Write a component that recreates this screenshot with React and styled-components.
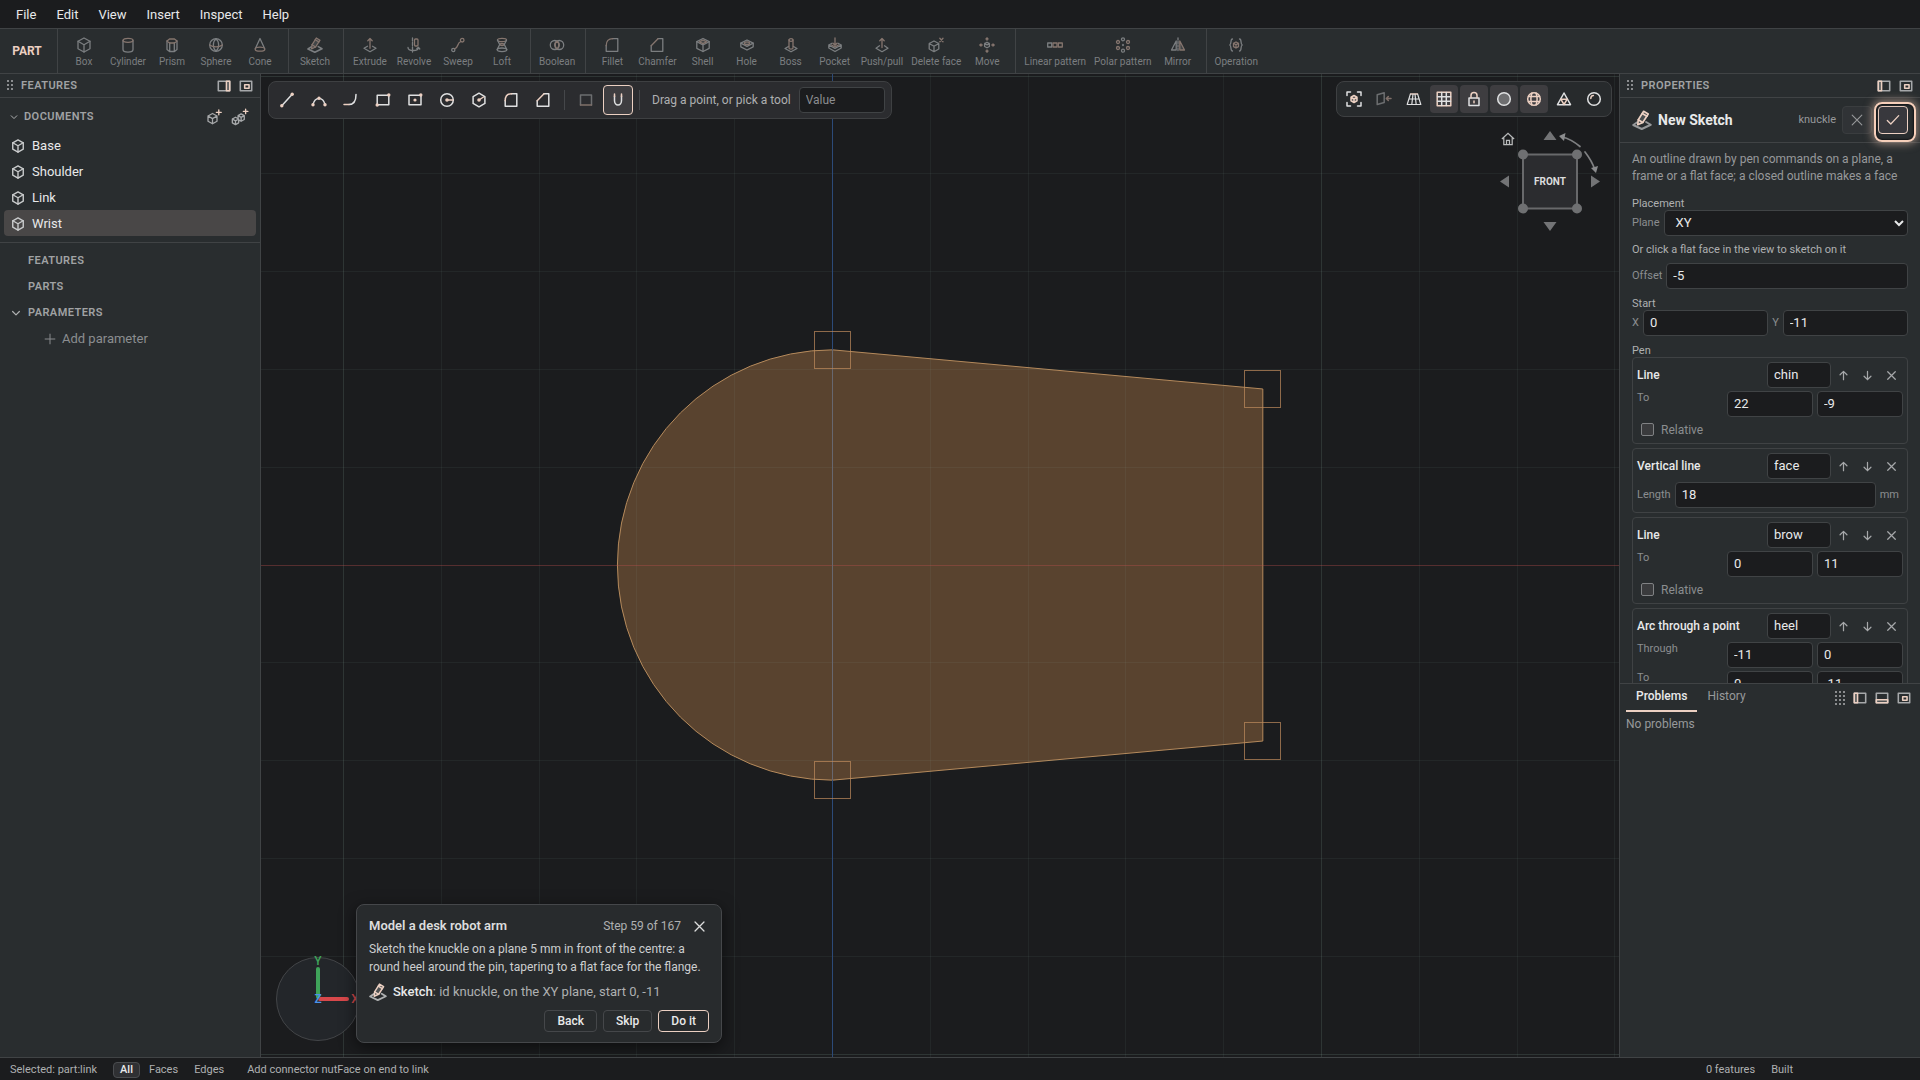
import React from 'react';
import styled, { createGlobalStyle } from 'styled-components';

const GlobalStyle = createGlobalStyle`
  :root {
    --ink: #1b1c1e;
    --panel: #292d2f;
    --raised: #2b2c2f;
    --line: #404345;
    --muted: #97999b;
    --soft: #aeb0b1;
    --text: #e8e9ea;
    --accent: #ecd0c2;
  }
  * { box-sizing: border-box; }
  body {
    margin: 0;
    background: var(--ink);
    color: var(--text);
    font: 13px/16px Roboto, "Liberation Sans", sans-serif;
  }
  button, input, select { font: inherit; color: inherit; margin: 0; }
  h2, h3, p { margin: 0; font-weight: 400; }
`;

/* ---------- icons ---------- */

const IconSvg = styled.svg`
  display: block;
  flex: none;
  width: ${(p) => p.$size || 16}px;
  height: ${(p) => p.$size || 16}px;
  fill: none;
  stroke: currentColor;
  stroke-width: ${(p) => p.$weight || 1.3};
  stroke-linejoin: round;
  stroke-linecap: round;
  .a { stroke: var(--accent); }
  .f { fill: var(--accent); stroke: none; }
  .g { fill: currentColor; fill-opacity: 0.3; }
`;

const icons = {
  box: <><path d="M8 1 14 4.3v7.4L8 15l-6-3.3V4.3z" /><path d="M2 4.3 8 7.7l6-3.4M8 7.7V15" /></>,
  cylinder: <><path d="M3 3.4v9.2C3 16 13 16 13 12.600V3.400" /><ellipse className="a" cx="8" cy="3.300" rx="5" ry="2" /></>,
  prism: <><path d="M3 4v8.500L5.500 14.500h5L13 12.500V4M5.700 6v8.300M10.300 6v8.300" /><path className="a" d="M3 4 5.500 2h5L13 4l-2.500 2h-5z" /></>,
  sphere: <><circle cx="8" cy="8" r="6.300" /><path d="M8 1.700c-3.500 3-3.500 9.600 0 12.600 3.500-3 3.500-9.600 0-12.600" /><path className="a" d="M1.700 8c3 2.400 9.600 2.400 12.600 0" /></>,
  cone: <><path d="M3.300 11.800 8 1.500l4.700 10.300" /><ellipse className="a" cx="8" cy="12.200" rx="4.800" ry="2" /></>,
  sketch: <><path strokeWidth="1.600" d="M4.200 9.800 1 12 7.800 15.200 15 11.800 11.300 9.600" /><path className="a g" d="M4.600 11.800 5 7.800 9.300 1 13 3.200 8.600 10z" /><path className="a" d="M8.200 2.800 11.900 5M5 7.800 8.600 10" /></>,
  extrude: <><path d="M5.500 9.300 2 11.300 8 14.700l6-3.400-3.500-2" /><path className="a" d="M8 11.300V1.600M5.800 3.700 8 1.500l2.200 2.200" /></>,
  revolve: <><path d="M6.500 1v14" strokeDasharray="3 1.500" /><rect className="a" x="8.500" y="2" width="3.500" height="7" rx="1" /><path d="M2 10.500c0 4 10.500 4 10.500 0M10.800 11.500l1.700-1.200 1.300 1.700" /></>,
  sweep: <><circle className="a" cx="12.200" cy="3.200" r="1.800" /><circle cx="3.300" cy="13" r="1.600" /><path className="a" d="M4.500 12C9 10.500 6.500 6 10.800 4.500" /></>,
  loft: <><ellipse className="a" cx="8" cy="3" rx="4.500" ry="1.600" /><ellipse className="a" cx="8" cy="7.500" rx="2.300" ry="1" /><ellipse cx="8" cy="12.800" rx="4.800" ry="1.800" /><path d="M3.500 3.200 5.700 7.500 3.200 12.500M12.500 3.200 10.300 7.500l2.500 5" /></>,
  boolean: <><circle cx="5.800" cy="8" r="4.500" /><circle cx="10.200" cy="8" r="4.500" /><path className="a" d="M8 4.100c2.400 2.200 2.400 5.600 0 7.800-2.400-2.200-2.400-5.600 0-7.800z" /></>,
  fillet: <><path d="M8.500 1.700h5.300v12.600H2.200V8.500" /><path className="a" d="M2.200 8.700c0-4.500 2.300-7 6.500-7" /></>,
  chamfer: <><path d="M9 1.700h4.800v12.600H2.200V8.700" /><path className="a" d="M2.200 8.700 9 1.700" /></>,
  shell: <><path d="M8 1.500 14.200 4.700v6.600L8 14.500l-6.200-3.200V4.700z" /><path d="M1.800 4.700 8 8l6.200-3.300M8 8v6.500" /><path className="a g" d="M8 3 11.600 4.800 8 6.600 4.400 4.800z" /></>,
  hole: <><path d="M8 3 14.200 6.200v3.600L8 13 1.800 9.800V6.200z" /><path d="M1.800 6.200 8 9.400l6.200-3.200" /><ellipse className="a g" cx="8" cy="6.200" rx="2.600" ry="1.400" /></>,
  boss: <><path d="M5.500 9.500 2 11.500 8 14.800l6-3.300-3.500-2" /><path className="a" d="M6 3v8c0 1.400 4 1.400 4 0V3" /><ellipse className="a" cx="8" cy="3" rx="2" ry="1.300" /></>,
  pocket: <><path d="M5 6.200 1.800 8v3L8 14.500l6.200-3.500V8L11 6.200M1.800 8 8 11.400 14.200 8" /><path className="a" d="M8 1v7M6 6.200 8 8.300l2-2.100M4.500 8 8 10l3.500-2" /></>,
  push: <><path d="M5.500 8.800 2 11.200 8 14.700l6-3.500-3.500-2.400" /><path className="a" d="M8 10.500V1.600M5.800 3.700 8 1.500l2.200 2.200" /></>,
  deleteFace: <><path d="M6 4 10.800 6.500v5.500L6 14.700 1.200 12V6.500zM1.200 6.500 6 9.200l4.800-2.700M6 9.200v5.500" /><path className="a" d="M11.800 1.200 15 4.800M15 1.200 11.800 4.800" /></>,
  move: <><path d="M8 5.200 10.400 6.500v3L8 10.800 5.600 9.500v-3zM5.600 6.500 8 7.900l2.400-1.400" /><path className="a" d="M8 .8v2.400M8 12.800v2.400M.8 8h2.400M12.800 8h2.400M7 2 8 .8 9 2M7 14l1 1.200L9 14M2 7 .8 8 2 9M14 7l1.200 1L14 9" /></>,
  linear: <><rect x="0.700" y="6" width="4" height="4" /><rect className="a" x="6" y="6" width="4" height="4" /><rect className="a" x="11.300" y="6" width="4" height="4" /></>,
  polar: <><circle cx="8" cy="2.300" r="1.500" /><circle className="a" cx="13" cy="5" r="1.500" /><circle className="a" cx="13" cy="11" r="1.500" /><circle cx="8" cy="13.700" r="1.500" /><circle className="a" cx="3" cy="11" r="1.500" /><circle className="a" cx="3" cy="5" r="1.500" /><path d="M8 7.500v1M7.500 8h1" /></>,
  mirror: <><path d="M8 1v14" strokeDasharray="2 1.500" /><path d="M6.200 4v9H1.500z" /><path className="a g" d="M9.800 4v9h4.700z" /></>,
  operation: <><path d="M4.500 2C2 2 3.800 7 1.800 8c2 1 .2 6 2.700 6M11.500 2c2.500 0 .7 5 2.700 6-2 1-.2 6-2.700 6" /><path className="a" d="M8 5 10.500 6.400v3.200L8 11 5.500 9.600V6.400zM5.500 6.400 8 7.800l2.500-1.400M8 7.800V11" /></>,
  line: <><path d="M3 13.500 13 2.500" /><circle className="f" cx="2.800" cy="13.700" r="1.700" /><circle className="f" cx="13.200" cy="2.300" r="1.700" /></>,
  arc: <><path d="M2 12.500C4 4.500 12 4.500 14 12.500" /><circle className="f" cx="2" cy="12.700" r="1.700" /><circle className="f" cx="14" cy="12.700" r="1.700" /><circle className="f" cx="8" cy="6.300" r="1.700" /></>,
  tangent: <><path d="M13 2.500c0 6.500-2 10-7 10" /><path className="a" d="M6 12.500H1" /></>,
  rect: <><path d="M2.200 3.200h11.600v9.600H2.200z" /><circle className="f" cx="13.800" cy="3" r="1.700" /><circle className="f" cx="2.200" cy="13" r="1.700" /></>,
  rectCenter: <><path d="M2 3.200h12v9.600H2z" /><circle className="f" cx="13.800" cy="3" r="1.700" /><circle className="f" cx="8" cy="8" r="1.600" /></>,
  circle: <><circle cx="8" cy="8" r="6.300" /><path className="a" d="M8 8h6" /><circle className="f" cx="8" cy="8" r="1.800" /></>,
  polygon: <><path d="M8 1.200 13.900 4.600v6.800L8 14.800 2.100 11.400V4.600z" /><path className="a" d="m8 8 4.500-3" /><circle className="f" cx="8" cy="8" r="1.800" /></>,
  construct: <><path d="M2.500 13V3h11v10" /><path className="a" d="M2.500 13h11" /></>,
  snap: <><path d="M4.500 4v4.500a3.500 4.500 0 0 0 7 0V4" /><path className="a" d="M4.500 2v2.500M11.500 2v2.500" /></>,
  fit: <><path d="M1 4.500V1h3.500M11.500 1H15v3.500M15 11.500V15h-3.500M4.500 15H1v-3.500" /><path className="a g" d="M8 4.500 11 6.200v3.600l-3 1.700-3-1.700V6.200zM5 6.200 8 8l3-1.800M8 8v3.500" /></>,
  section: <><path d="M1.200 3.800 8.200 1.800v9.700L1.200 13.500z" /><path className="a" d="M15 7.500h-4.500M12.300 5.500 10.300 7.500l2 2" /></>,
  perspective: <><path className="a" d="M4.500 3h7" /><path strokeWidth="1.200" d="M4.300 3.300 1.200 13.500h13.600L11.700 3.300M3 8h10M7 3.300 5.800 13.500M9 3.300l1.200 10.200" /></>,
  grid: <><path className="a" d="M1.200 1.200h13.600v13.600H1.200z" /><path d="M5.700 1.500v13M10.300 1.500v13M1.500 5.700h13M1.500 10.300h13" /></>,
  lock: <><rect x="3" y="7" width="10" height="7.500" /><path className="a" d="M5 6.800V4.500a3 3 0 0 1 6 0v2.300M8 10v1.700" /></>,
  shaded: <><circle className="g" cx="8" cy="8" r="6.300" /></>,
  globe: <><circle className="a" cx="8" cy="8" r="6.300" /><path className="a" d="M2.500 5.500h11M2.500 10.500h11M6 2c-1.500 4-1.500 8 0 12M10 2c1.500 4 1.500 8 0 12" /></>,
  mesh: <><path d="M8 2 14.500 13.700h-13z" /><path className="a" d="M4.800 8.200h6.400L8 13.500z" /></>,
  ball: <><circle cx="8" cy="8" r="6.300" /><path className="a" d="M4.800 7.500c0-1.800 1-2.900 2.600-3" /></>,
  dockRight: <><path d="M1.500 2.500h13v11h-13z" /><path className="a g" d="M10.800 2.500h3.700v11h-3.700z" /></>,
  dockLeft: <><path d="M1.500 2.500h13v11h-13z" /><path className="a g" d="M1.500 2.500h3.700v11H1.500z" /></>,
  dockBottom: <><path d="M1.500 2.500h13v11h-13z" /><path className="a g" d="M1.500 10h13v3.500h-13z" /></>,
  popOut: <><path d="M1.500 2.500h13v11h-13z" /><path className="a" d="M6.500 6.500h5v4h-5z" /></>,
  addPart: <><path d="M6.500 4.500 11 7v5.200l-4.500 2.600L2 12.200V7zM2 7l4.500 2.600L11 7M6.500 9.600v5.200" /><path className="a" d="M12.800.8v5M10.300 3.300h5" /></>,
  addAssembly: <><path d="M4 8.200 6.800 9.800v3.400L4 14.800 1.200 13.200V9.800zM1.200 9.800 4 11.400l2.800-1.600M4 11.400v3.400M9 5.200 11.800 6.800v3.400L9 11.800 6.800 10.500M6.300 6.800 9 5.200M6.300 6.800 9 8.400l2.800-1.600M9 8.400v3.400M6.300 6.800v2.400" /><path className="a" d="M13 1v4M11 3h4" /></>,
  chevron: <path d="m3.500 6 4.500 4.500L12.500 6" />,
  plus: <path d="M8 1.500v13M1.500 8h13" />,
  close: <path d="m2.500 2.500 11 11M13.500 2.500l-11 11" />,
  check: <path d="m1.500 8.500 4 4L14.500 3" />,
  up: <path d="M8 14V2M3 7l5-5 5 5" />,
  down: <path d="M8 2v12M3 9l5 5 5-5" />,
  home: <><path d="M1 8 8 1.500 15 8M3.200 6.500v8h9.600v-8" /><path className="a" d="M6.300 14.500V9.500h3.400v5" /></>,
};

const Icon = ({ name, size, weight }) => (
  <IconSvg viewBox="0 0 16 16" $size={size} $weight={weight} aria-hidden="true">{icons[name]}</IconSvg>
);

/* ---------- shell ---------- */

const Shell = styled.div`
  display: flex;
  flex-direction: column;
  height: 100vh;
  overflow: hidden;
`;

const MenuBar = styled.nav`
  display: flex;
  height: 28px;
  padding: 1px 6px 0;
  flex: none;
`;

const MenuItem = styled.button`
  border: 0;
  background: none;
  padding: 0 10px;
`;

const Ribbon = styled.div`
  display: flex;
  flex: none;
  height: 46px;
  background: var(--panel);
  border-top: 1px solid var(--line);
  border-bottom: 1px solid var(--line);
`;

const Mode = styled.div`
  display: flex;
  align-items: center;
  justify-content: center;
  width: 57px;
  padding-right: 3px;
  color: var(--accent);
  font-size: 12px;
  font-weight: 700;
`;

const ToolGroup = styled.div`
  display: flex;
  padding: 0 6px 0 4px;
  border-left: 1px solid var(--line);
`;

const Tool = styled.button`
  --accent: #85756e;
  display: flex;
  flex-direction: column;
  align-items: center;
  gap: 3px;
  min-width: 44px;
  padding: 8px 4px 0;
  border: 0;
  background: none;
  color: #7b7e80;
  font-size: 10px;
  line-height: 12px;
  white-space: nowrap;
`;

const Workspace = styled.div`
  display: grid;
  grid-template-columns: 261px minmax(0, 1fr) 301px;
  flex: 1;
  min-height: 0;
`;

const SidePanel = styled.aside`
  display: flex;
  flex-direction: column;
  min-height: 0;
  background: var(--panel);
  border: 0 solid var(--line);
  border-width: ${(p) => (p.$side === 'left' ? '0 1px 0 0' : '0 0 0 1px')};
`;

const PanelHeader = styled.header`
  display: flex;
  align-items: center;
  gap: 7px;
  flex: none;
  height: 24px;
  padding: 0 3px 0 7px;
  border-bottom: 1px solid var(--line);
`;

const Caption = styled.h2`
  flex: 1;
  color: #a0a2a4;
  font-size: 11px;
  font-weight: 600;
  letter-spacing: 0.04em;
  text-transform: uppercase;
`;

const Grip = styled.span`
  width: ${(p) => p.$columns * 4 - 1}px;
  height: ${(p) => p.$rows * 4 - 1}px;
  background: radial-gradient(circle at 1px 1px, #8b8d8f 1px, transparent 1px) 0 0 / 4px 4px;
`;

const PlainButton = styled.button`
  display: flex;
  align-items: center;
  justify-content: center;
  padding: 0;
  width: ${(p) => p.$width || 22}px;
  height: 22px;
  border: 0;
  background: none;
  color: ${(p) => p.$tone || '#a6a8aa'};
`;

const IconRow = styled.div`
  display: flex;
`;

/* ---------- document tree ---------- */

const DocumentsHeader = styled.div`
  display: flex;
  align-items: center;
  gap: 5px;
  height: 26px;
  margin: 6px 0 2px;
  padding: 0 7px 0 9px;
  color: var(--soft);
`;

const DocumentList = styled.div`
  display: flex;
  flex-direction: column;
  padding: 0 4px 6px;
  border-bottom: 1px solid var(--line);
`;

const DocumentRow = styled.button`
  display: flex;
  align-items: center;
  gap: 7px;
  height: 26px;
  padding: 1px 8px 0 7px;
  border: 0;
  border-radius: 4px;
  background: ${(p) => (p.$selected ? '#494747' : 'none')};
  text-align: left;
  svg { color: #c9cbcc; }
`;

const Sections = styled.div`
  padding: 5px 10px;
`;

const SectionRow = styled.div`
  display: flex;
  align-items: center;
  gap: 6px;
  height: 26px;
  color: var(--soft);
`;

const ChevronSlot = styled.span`
  width: 12px;
`;

const AddParameter = styled.button`
  display: flex;
  align-items: center;
  gap: 6px;
  height: 26px;
  padding: 0 34px;
  border: 0;
  background: none;
  color: #8b8d90;
`;

/* ---------- viewport ---------- */

const Viewport = styled.main`
  position: relative;
  overflow: hidden;
  background: #1b1c1e;
`;

const Scene = styled.svg`
  display: block;
  width: 100%;
  height: 100%;
`;

const floating = `
  position: absolute;
  display: flex;
  align-items: center;
  border: 1px solid #3e4042;
  border-radius: 8px;
`;

const SketchBar = styled.div`
  ${floating}
  top: 7px;
  left: 7px;
  height: 38px;
  gap: 2px;
  padding: 0 6px 0 3px;
  background: var(--raised);
`;

const ViewBar = styled.div`
  ${floating}
  top: 7px;
  right: 7px;
  height: 36px;
  gap: 2px;
  padding: 0 3px;
  background: #272a2c;
`;

const BarButton = styled.button`
  display: flex;
  align-items: center;
  justify-content: center;
  width: ${(p) => p.$size}px;
  height: ${(p) => p.$size}px;
  padding: 0;
  border: 1px solid ${(p) => (p.$outlined ? 'var(--accent)' : 'transparent')};
  border-radius: 4px;
  background: ${(p) => (p.$on ? '#3e3d40' : 'none')};
  color: #dfe0e1;
  &:disabled { --accent: #80706a; color: #6c6e70; }
`;

const BarDivider = styled.span`
  width: 1px;
  height: 20px;
  margin: 0 4px;
  background: #45474a;
`;

const BarLabel = styled.label`
  display: flex;
  align-items: center;
  gap: 8px;
  padding-left: 6px;
  color: var(--soft);
  font-size: 12px;
  white-space: nowrap;
`;

const Field = styled.input`
  flex: ${(p) => (p.$width ? 'none' : '1 1 0')};
  width: ${(p) => (p.$width ? `${p.$width}px` : 'auto')};
  min-width: 0;
  height: 26px;
  padding: 0 6px 1px;
  border: 1px solid #404345;
  border-radius: 4px;
  background: var(--ink);
  outline: 0;
  &::placeholder { color: #8b8d90; font-size: 12px; }
`;

const ViewCube = styled.svg`
  position: absolute;
  top: 54px;
  right: 12px;
  width: 112px;
  height: 108px;
  color: #dcdddd;
`;

const AxisGizmo = styled.svg`
  position: absolute;
  left: 14px;
  bottom: 15px;
  width: 88px;
  height: 86px;
`;

const TourCard = styled.section`
  position: absolute;
  left: 95px;
  bottom: 14px;
  display: flex;
  flex-direction: column;
  width: 366px;
  padding: 10px 12px;
  border: 1px solid #45474a;
  border-radius: 8px;
  background: #282b2d;
  box-shadow: 0 4px 16px #0008;
`;

const TourHeader = styled.header`
  display: flex;
  align-items: center;
  gap: 8px;
  height: 22px;
  color: var(--soft);
  font-size: 12px;
`;

const TourTitle = styled.h3`
  flex: 1;
  color: #dcdddd;
  font-size: 13px;
  font-weight: 600;
`;

const TourText = styled.p`
  margin: 3px 0 7px;
  color: #cdcfd0;
  font-size: 12px;
  line-height: 18px;
`;

const TourStep = styled.p`
  display: flex;
  align-items: center;
  gap: 6px;
  height: 18px;
  color: var(--soft);
  b { color: var(--text); font-weight: 500; }
`;

const TourActions = styled.footer`
  display: flex;
  justify-content: flex-end;
  gap: 6px;
  margin-top: 9px;
`;

const TourButton = styled.button`
  height: 22px;
  padding: 0 12px;
  border: 1px solid ${(p) => (p.$primary ? 'var(--accent)' : '#45474a')};
  border-radius: 4px;
  background: none;
  font-size: 12px;
  font-weight: 500;
  line-height: 14px;
`;

/* ---------- properties ---------- */

const OperationHeader = styled.div`
  display: flex;
  align-items: center;
  gap: 6px;
  flex: none;
  height: 45px;
  padding: 0 12px;
  border-bottom: 1px solid var(--line);
  color: var(--muted);
  font-size: 11px;
`;

const OperationTitle = styled.h3`
  flex: 1;
  color: var(--text);
  font-size: 14px;
  font-weight: 700;
`;

const ConfirmButton = styled.button`
  position: relative;
  display: flex;
  align-items: center;
  justify-content: center;
  width: 30px;
  height: 28px;
  padding: 0;
  border: 1px solid ${(p) => (p.$primary ? 'var(--accent)' : '#3a3d3f')};
  border-radius: 4px;
  background: ${(p) => (p.$primary ? '#38383d' : '#303336')};
  color: ${(p) => (p.$primary ? 'var(--accent)' : '#97999b')};
`;

const Spotlight = styled.span`
  position: absolute;
  inset: -5px -9px -9px -5px;
  border: 2px solid #f6cfba;
  border-radius: 8px;
  box-shadow: 0 0 8px 2px #f6cfba80, inset 0 0 2px 1px #141517;
`;

const Form = styled.form`
  flex: 1;
  min-height: 0;
  overflow: hidden;
  padding: 8px 12px 0;
`;

const Description = styled.p`
  margin-bottom: 12px;
  color: var(--muted);
  font-size: 12px;
  line-height: 17px;
`;

const Group = styled.fieldset`
  margin: 0 0 8px;
  padding: 0;
  border: 0;
  min-width: 0;
`;

const GroupTitle = styled.legend`
  padding: 0;
  color: var(--soft);
  font-size: 11px;
  line-height: 13px;
`;

const Hint = styled.p`
  margin: 7px 0;
  color: var(--soft);
  font-size: 11px;
  line-height: 13px;
`;

const FieldRow = styled.div`
  display: flex;
  align-items: center;
  gap: 4px;
  color: #8b8d90;
  font-size: 11px;
  ${Field} { color: var(--text); font-size: 13px; }
`;

const PlaneSelect = styled.select`
  flex: 1;
  height: 26px;
  padding: 0 0 1px 5px;
  border: 1px solid #404345;
  border-radius: 4px;
  background: var(--ink);
  color: var(--text);
  font-size: 13px;
  text-indent: 2px;
`;

const PenCard = styled.div`
  display: flex;
  flex-direction: column;
  gap: 3px;
  margin-bottom: 4px;
  padding: 4px;
  border: 1px solid #3f4244;
  border-radius: 4px;
`;

const PenHead = styled.div`
  display: flex;
  align-items: center;
`;

const PenName = styled.h3`
  flex: 1;
  font-size: 12px;
  font-weight: 500;
`;

const PenActions = styled.div`
  display: flex;
`;

const PointRow = styled.div`
  display: flex;
  gap: 4px;
  color: #8b8d90;
  font-size: 11px;
  line-height: 13px;
  span { flex: 1; }
  ${Field} { color: var(--text); font-size: 13px; }
`;

const Unit = styled.span`
  padding-right: 4px;
`;

const CheckLabel = styled.label`
  display: flex;
  align-items: center;
  gap: 7px;
  height: 19px;
  padding-left: 4px;
  color: #8b8d90;
  font-size: 12px;
`;

const CheckBox = styled.input`
  appearance: none;
  width: 13px;
  height: 13px;
  border: 1px solid #808284;
  border-radius: 2px;
  background: #3a3b3d;
`;

const Dock = styled.section`
  flex: 0 0 374px;
  padding: 0 5px 0 6px;
  border-top: 1px solid var(--line);
  color: var(--muted);
  font-size: 12px;
`;

const TabRow = styled.div`
  display: flex;
  align-items: center;
  height: 28px;
`;

const Tab = styled.button`
  height: 28px;
  padding: 0 10px 2px;
  border: 0;
  border-bottom: 2px solid ${(p) => (p.$active ? 'var(--accent)' : 'transparent')};
  background: none;
  color: ${(p) => (p.$active ? 'var(--text)' : 'inherit')};
  font-weight: ${(p) => (p.$active ? 500 : 400)};
`;

const DockTools = styled.div`
  display: flex;
  align-items: center;
  gap: 3px;
  margin-left: auto;
`;

const DockBody = styled.p`
  padding-top: 4px;
`;

/* ---------- status ---------- */

const StatusBar = styled.footer`
  display: flex;
  align-items: center;
  gap: 16px;
  flex: none;
  height: 23px;
  padding: 1px 127px 0 10px;
  border-top: 1px solid var(--line);
  color: var(--soft);
  font-size: 11px;
  line-height: 14px;
`;

const Filters = styled.div`
  display: flex;
  gap: 2px;
`;

const Filter = styled.button`
  height: 16px;
  padding: 0 6px;
  border: 1px solid ${(p) => (p.$active ? '#4a4c4f' : 'transparent')};
  border-radius: 4px;
  background: ${(p) => (p.$active ? '#2f3033' : 'none')};
  color: ${(p) => (p.$active ? 'var(--text)' : 'inherit')};
  font-weight: ${(p) => (p.$active ? 500 : 400)};
  line-height: 14px;
`;

const Spacer = styled.span`
  flex: 1;
`;

/* ---------- data ---------- */

const menus = ['File', 'Edit', 'View', 'Insert', 'Inspect', 'Help'];

const toolGroups = [
  [['Box', 'box'], ['Cylinder', 'cylinder'], ['Prism', 'prism'], ['Sphere', 'sphere'], ['Cone', 'cone']],
  [['Sketch', 'sketch']],
  [['Extrude', 'extrude'], ['Revolve', 'revolve'], ['Sweep', 'sweep'], ['Loft', 'loft']],
  [['Boolean', 'boolean']],
  [['Fillet', 'fillet'], ['Chamfer', 'chamfer'], ['Shell', 'shell'], ['Hole', 'hole'], ['Boss', 'boss'], ['Pocket', 'pocket'], ['Push/pull', 'push'], ['Delete face', 'deleteFace'], ['Move', 'move']],
  [['Linear pattern', 'linear'], ['Polar pattern', 'polar'], ['Mirror', 'mirror']],
  [['Operation', 'operation']],
];

const sketchTools = ['line', 'arc', 'tangent', 'rect', 'rectCenter', 'circle', 'polygon', 'fillet', 'chamfer'];

const viewTools = [
  ['fit'], ['section', 'disabled'], ['perspective'], ['grid', 'on'], ['lock', 'on'],
  ['shaded', 'on'], ['globe', 'on'], ['mesh'], ['ball'],
];

const documents = ['Base', 'Shoulder', 'Link', 'Wrist'];

const penSteps = [
  { kind: 'Line', name: 'chin', points: [['To', '22', '-9']], relative: true },
  { kind: 'Vertical line', name: 'face', length: '18' },
  { kind: 'Line', name: 'brow', points: [['To', '0', '11']], relative: true },
  { kind: 'Arc through a point', name: 'heel', points: [['Through', '-11', '0'], ['To', '0', '-11']], relative: true },
];

/* ---------- drawing ---------- */

const CX = 571.5;
const CY = 491;
const STEP = 97.8;
const MM = STEP / 5;
const ticks = Array.from({ length: 21 }, (_, i) => i - 10);
const corners = [[0, 11], [22, 9], [22, -9], [0, -11]];

const SketchScene = () => {
  const px = (x) => CX + x * MM;
  const py = (y) => CY - y * MM;
  const r = 11 * MM;
  return (
    <Scene viewBox="0 0 1358 983" preserveAspectRatio="xMidYMid slice">
      <path
        d={`M${px(0)} ${py(-11)}L${px(22)} ${py(-9)}V${py(9)}L${px(0)} ${py(11)}A${r} ${r} 0 0 0 ${px(0)} ${py(-11)}z`}
        fill="#59432f" stroke="#b58a5c"
      />
      {ticks.filter((t) => t !== 0).map((t) => (
        <g key={t} stroke="#8fb0a8" strokeOpacity={t % 5 === 0 ? 0.17 : 0.08}>
          <path d={`M${Math.floor(CX + t * STEP) + 0.5} 0V983`} />
          <path d={`M0 ${Math.floor(CY + t * STEP) + 0.5}H1358`} />
        </g>
      ))}
      <path d={`M0 ${CY + 0.5}H1358`} stroke="#c0504d" strokeOpacity="0.36" />
      <path d={`M${CX} 0V983`} stroke="#2c4a78" />
      <path d={`M${CX} ${py(11)}V${py(-11)}`} stroke="#67676f" />
      {corners.map(([x, y]) => (
        <rect key={`${x},${y}`} x={Math.floor(px(x)) - 17.5} y={Math.round(py(y)) - 18.5} width="36" height="37" fill="none" stroke="#c08c5c" strokeOpacity="0.7" />
      ))}
    </Scene>
  );
};

const Cube = () => (
  <ViewCube viewBox="0 0 112 108">
    <g fill="#737476">
      <path d="M55 3 61.500 12h-13zM55 103l6.500-9h-13zM5 53.500l9-6v12zM105 53.500l-9-6v12z" />
    </g>
    <rect x="28" y="26.500" width="54" height="54" fill="#2b2c2f" stroke="#68696b" strokeWidth="2" />
    <g fill="#6f7072">
      <circle cx="28" cy="26.500" r="5" /><circle cx="82" cy="26.500" r="5" />
      <circle cx="28" cy="80.500" r="5" /><circle cx="82" cy="80.500" r="5" />
    </g>
    <g fill="none" stroke="#7f8082" strokeWidth="1.700" strokeLinecap="round">
      <path d="M67 9Q76 11 85 18.500M90 24Q97 33 100 42" />
    </g>
    <path d="M64 8l6.500-3-1.500 8zM101 45l-5-5 7-2z" fill="#8b8c8e" />
    <text x="55" y="57" textAnchor="middle" fill="#dcdddd" fontSize="10" fontWeight="700">FRONT</text>
    <svg x="6" y="4" width="14" height="14" viewBox="0 0 16 16" fill="none" stroke="#b9bbbc" strokeWidth="1.400">{icons.home}</svg>
  </ViewCube>
);

const Gizmo = () => (
  <AxisGizmo viewBox="0 0 88 86" fontSize="12" fontWeight="500" textAnchor="middle">
    <circle cx="43" cy="43" r="41.500" fill="#23262a" stroke="#434548" />
    <path d="M43 41V13" stroke="#3fa35a" strokeWidth="4" strokeLinecap="round" />
    <path d="M45 43h27" stroke="#d8484b" strokeWidth="4" strokeLinecap="round" />
    <text x="43" y="9" fill="#3fa35a">Y</text>
    <text x="80" y="47" fill="#d8484b">X</text>
    <text x="43" y="47" fill="#4b93ea">Z</text>
  </AxisGizmo>
);

const PenStep = ({ step, index }) => {
  const nameId = `pen-${index}`;
  return (
    <PenCard>
      <PenHead>
        <PenName>{step.kind}</PenName>
        <Field $width={64} aria-label="Name" id={nameId} defaultValue={step.name} />
        <PenActions>
          {['up', 'down', 'close'].map((a) => (
            <PlainButton type="button" key={a} $width={24} aria-label={a}><Icon name={a} size={11} weight={1.8} /></PlainButton>
          ))}
        </PenActions>
      </PenHead>
      {step.length && (
        <FieldRow>
          <label htmlFor={`${nameId}-length`}>Length</label>
          <Field id={`${nameId}-length`} defaultValue={step.length} />
          <Unit>mm</Unit>
        </FieldRow>
      )}
      {(step.points || []).map(([label, x, y]) => (
        <PointRow key={label}>
          <span>{label}</span>
          <Field $width={86} aria-label={`${label} X`} defaultValue={x} />
          <Field $width={86} aria-label={`${label} Y`} defaultValue={y} />
        </PointRow>
      ))}
      {step.relative && (
        <CheckLabel><CheckBox type="checkbox" />Relative</CheckLabel>
      )}
    </PenCard>
  );
};

const DockButton = ({ label, icon }) => (
  <PlainButton aria-label={label}><Icon name={icon} size={14} weight={1.8} /></PlainButton>
);

export default function App() {
  return (
    <Shell>
      <GlobalStyle />
      <MenuBar>{menus.map((m) => <MenuItem key={m}>{m}</MenuItem>)}</MenuBar>
      <Ribbon>
        <Mode>PART</Mode>
        {toolGroups.map((group) => (
          <ToolGroup key={group[0][0]}>
            {group.map(([label, icon]) => (
              <Tool key={label}><Icon name={icon} />{label}</Tool>
            ))}
          </ToolGroup>
        ))}
      </Ribbon>

      <Workspace>
        <SidePanel $side="left">
          <PanelHeader>
            <Grip $columns={2} $rows={3} />
            <Caption>Features</Caption>
            <IconRow>
              <DockButton label="Dock right" icon="dockRight" />
              <DockButton label="Pop out" icon="popOut" />
            </IconRow>
          </PanelHeader>
          <DocumentsHeader>
            <Icon name="chevron" size={10} weight={1.6} />
            <Caption>Documents</Caption>
            <IconRow>
              <PlainButton $width={26} aria-label="New part"><Icon name="addPart" /></PlainButton>
              <PlainButton $width={26} aria-label="New assembly"><Icon name="addAssembly" size={18} weight={1.2} /></PlainButton>
            </IconRow>
          </DocumentsHeader>
          <DocumentList>
            {documents.map((d) => (
              <DocumentRow key={d} $selected={d === 'Wrist'}><Icon name="box" size={14} weight={1.6} />{d}</DocumentRow>
            ))}
          </DocumentList>
          <Sections>
            <SectionRow><ChevronSlot /><Caption>Features</Caption></SectionRow>
            <SectionRow><ChevronSlot /><Caption>Parts</Caption></SectionRow>
            <SectionRow><Icon name="chevron" size={12} weight={1.6} /><Caption>Parameters</Caption></SectionRow>
            <AddParameter><Icon name="plus" size={12} />Add parameter</AddParameter>
          </Sections>
        </SidePanel>

        <Viewport>
          <SketchScene />
          <SketchBar>
            {sketchTools.map((t) => (
              <BarButton key={t} $size={30} aria-label={t}><Icon name={t} weight={1.5} /></BarButton>
            ))}
            <BarDivider />
            <BarButton $size={30} disabled aria-label="construction"><Icon name="construct" weight={1.5} /></BarButton>
            <BarButton $size={30} $on $outlined aria-label="snap"><Icon name="snap" weight={1.5} /></BarButton>
            <BarDivider />
            <BarLabel>
              Drag a point, or pick a tool
              <Field $width={86} placeholder="Value" />
            </BarLabel>
          </SketchBar>
          <ViewBar>
            {viewTools.map(([t, state]) => (
              <BarButton key={t} $size={28} $on={state === 'on'} disabled={state === 'disabled'} aria-label={t}>
                <Icon name={t} weight={1.5} />
              </BarButton>
            ))}
          </ViewBar>
          <Cube />
          <Gizmo />
          <TourCard>
            <TourHeader>
              <TourTitle>Model a desk robot arm</TourTitle>
              Step 59 of 167
              <PlainButton $width={20} $tone="#dcdddd" aria-label="Close"><Icon name="close" size={13} weight={1.6} /></PlainButton>
            </TourHeader>
            <TourText>Sketch the knuckle on a plane 5 mm in front of the centre: a round heel around the pin, tapering to a flat face for the flange.</TourText>
            <TourStep><Icon name="sketch" size={18} /><span><b>Sketch</b>: id knuckle, on the XY plane, start 0, -11</span></TourStep>
            <TourActions>
              <TourButton>Back</TourButton>
              <TourButton>Skip</TourButton>
              <TourButton $primary>Do it</TourButton>
            </TourActions>
          </TourCard>
        </Viewport>

        <SidePanel $side="right">
          <PanelHeader>
            <Grip $columns={2} $rows={3} />
            <Caption>Properties</Caption>
            <IconRow>
              <DockButton label="Dock left" icon="dockLeft" />
              <DockButton label="Pop out" icon="popOut" />
            </IconRow>
          </PanelHeader>
          <OperationHeader>
            <Icon name="sketch" size={20} />
            <OperationTitle>New Sketch</OperationTitle>
            knuckle
            <ConfirmButton aria-label="Cancel"><Icon name="close" size={14} /></ConfirmButton>
            <ConfirmButton $primary aria-label="Apply"><Icon name="check" size={14} weight={1.5} /><Spotlight /></ConfirmButton>
          </OperationHeader>
          <Form>
            <Description>An outline drawn by pen commands on a plane, a frame or a flat face; a closed outline makes a face</Description>
            <Group>
              <GroupTitle>Placement</GroupTitle>
              <FieldRow>
                <label htmlFor="plane">Plane</label>
                <PlaneSelect id="plane" defaultValue="XY"><option>XY</option></PlaneSelect>
              </FieldRow>
              <Hint>Or click a flat face in the view to sketch on it</Hint>
              <FieldRow>
                <label htmlFor="offset">Offset</label>
                <Field id="offset" defaultValue="-5" />
              </FieldRow>
            </Group>
            <Group>
              <GroupTitle>Start</GroupTitle>
              <FieldRow>
                <label htmlFor="start-x">X</label>
                <Field id="start-x" defaultValue="0" />
                <label htmlFor="start-y">Y</label>
                <Field id="start-y" defaultValue="-11" />
              </FieldRow>
            </Group>
            <Group>
              <GroupTitle>Pen</GroupTitle>
              {penSteps.map((s, i) => <PenStep key={s.name} step={s} index={i} />)}
            </Group>
          </Form>
          <Dock>
            <TabRow>
              <Tab $active>Problems</Tab>
              <Tab>History</Tab>
              <DockTools>
                <Grip $columns={3} $rows={4} />
                <IconRow>
                  <DockButton label="Dock left" icon="dockLeft" />
                  <DockButton label="Dock bottom" icon="dockBottom" />
                  <DockButton label="Pop out" icon="popOut" />
                </IconRow>
              </DockTools>
            </TabRow>
            <DockBody>No problems</DockBody>
          </Dock>
        </SidePanel>
      </Workspace>

      <StatusBar>
        <span>Selected: part:link</span>
        <Filters>
          <Filter $active>All</Filter>
          <Filter>Faces</Filter>
          <Filter>Edges</Filter>
        </Filters>
        <span>Add connector nutFace on end to link</span>
        <Spacer />
        <span>0 features</span>
        <span>Built</span>
      </StatusBar>
    </Shell>
  );
}
